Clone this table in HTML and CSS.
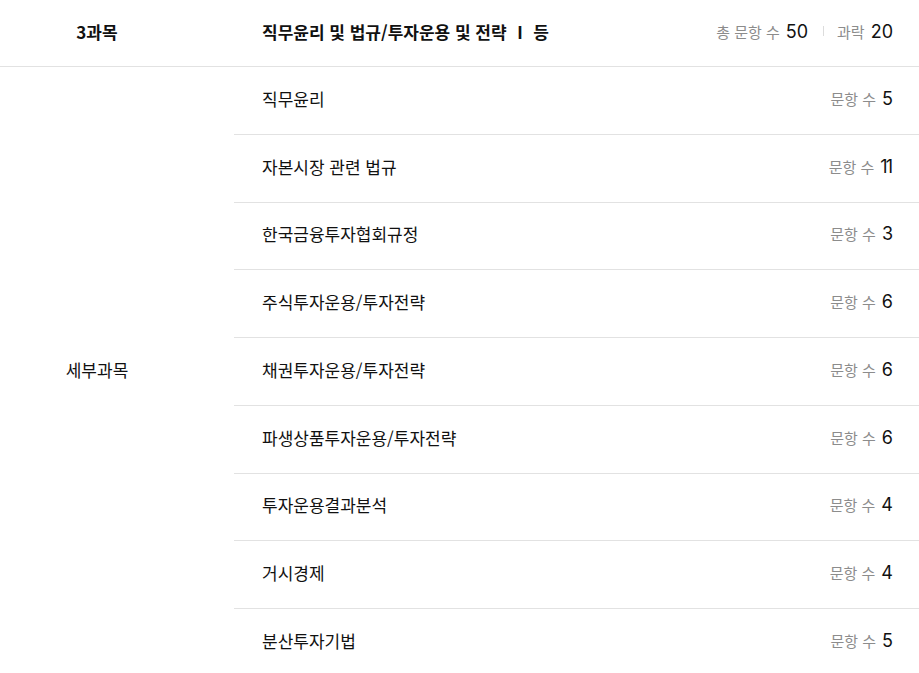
FILE: index.html
```html
<!DOCTYPE html>
<html lang="ko">
<head>
<meta charset="utf-8">
<link rel="stylesheet" href="styles.css">
</head>
<body>
<div class="subject">
  <div class="head">
    <div class="left strong">3과목</div>
    <div class="head-main">
      <div class="title">직무윤리 및 법규/투자운용 및 전략 Ⅰ 등</div>
      <div class="meta">
        <span class="lbl">총 문항 수</span><span class="num">50</span>
        <span class="sep"></span>
        <span class="lbl">과락</span><span class="num">20</span>
      </div>
    </div>
  </div>
  <div class="body">
    <div class="left">세부과목</div>
    <ul class="list">
      <li class="row"><span>직무윤리</span><span class="cnt"><span class="lbl">문항 수</span><span class="num">5</span></span></li>
      <li class="row"><span>자본시장 관련 법규</span><span class="cnt"><span class="lbl">문항 수</span><span class="num narrow">11</span></span></li>
      <li class="row"><span>한국금융투자협회규정</span><span class="cnt"><span class="lbl">문항 수</span><span class="num">3</span></span></li>
      <li class="row"><span>주식투자운용/투자전략</span><span class="cnt"><span class="lbl">문항 수</span><span class="num">6</span></span></li>
      <li class="row"><span>채권투자운용/투자전략</span><span class="cnt"><span class="lbl">문항 수</span><span class="num">6</span></span></li>
      <li class="row"><span>파생상품투자운용/투자전략</span><span class="cnt"><span class="lbl">문항 수</span><span class="num">6</span></span></li>
      <li class="row"><span>투자운용결과분석</span><span class="cnt"><span class="lbl">문항 수</span><span class="num">4</span></span></li>
      <li class="row"><span>거시경제</span><span class="cnt"><span class="lbl">문항 수</span><span class="num">4</span></span></li>
      <li class="row"><span>분산투자기법</span><span class="cnt"><span class="lbl">문항 수</span><span class="num">5</span></span></li>
    </ul>
  </div>
</div>
</body>
</html>
```
FILE: styles.css
```css
* { box-sizing: border-box; }
html, body { margin: 0; padding: 0; background: #fff; }
body {
  font-family: "Noto Sans CJK KR", "Noto Sans", sans-serif;
  font-size: 17px;
  color: #111;
}
.subject { width: 919px; }
.head {
  display: flex;
  height: 67px;
  padding-bottom: 4px;
  border-bottom: 1px solid #e2e2e2;
  align-items: center;
}
.left {
  width: 194px;
  flex: none;
  text-align: center;
}
.strong { font-weight: 700; }
.head-main {
  flex: 1;
  margin-left: 40px;
  padding: 0 26px 0 28px;
  display: flex;
  justify-content: space-between;
  align-items: center;
}
.title { font-weight: 700; }
.meta { display: flex; align-items: center; }
.lbl { color: #8c8c8c; font-size: 15px; }
.num {
  font-family: "Inter", "Noto Sans", sans-serif;
  font-size: 18px;
  color: #111;
  margin-left: 6px;
}
.narrow { letter-spacing: -2px; margin-right: 2px; }
.sep {
  width: 1px;
  height: 10px;
  background: #dcdcdc;
  margin: 0 13px 0 15px;
}
.body { display: flex; align-items: center; }
.body .left { padding-bottom: 4px; }
.list {
  list-style: none;
  margin: 0 0 0 40px;
  padding: 0;
  flex: 1;
}
.row {
  display: flex;
  justify-content: space-between;
  align-items: center;
  height: 67.75px;
  padding: 0 26px 4px 28px;
  border-top: 1px solid #e2e2e2;
}
.row:first-child { border-top: none; height: 66.75px; }
.cnt { display: flex; align-items: center; }
```
